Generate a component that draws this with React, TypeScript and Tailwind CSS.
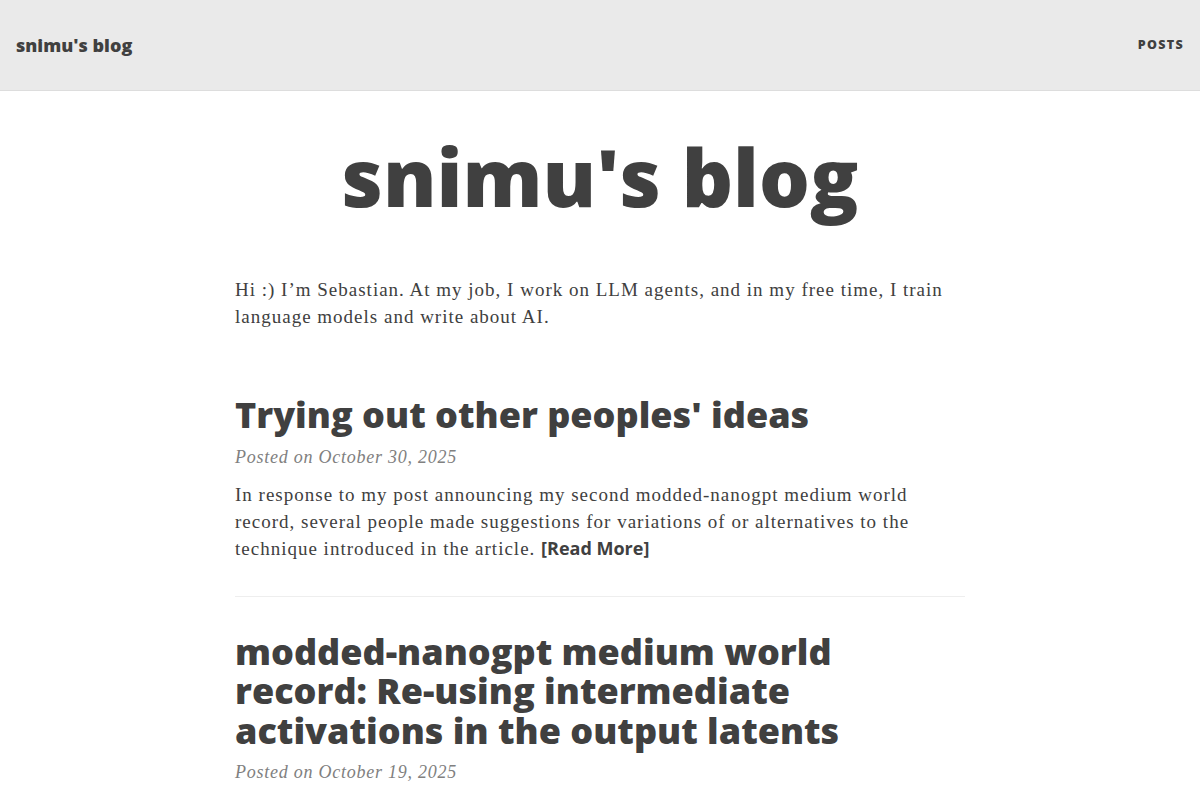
export default function App() {
  const serif = "font-['Liberation_Serif',serif]";
  return (
    <div className="min-h-screen bg-white text-[#404040]">
      <header className="h-[91px] bg-[#eaeaea] border-b border-[#dddddd] flex items-center justify-between px-4 font-['Open_Sans',sans-serif]">
        <div className="text-[18px] font-extrabold text-[#404040]">snimu's blog</div>
        <div className="text-[12.5px] font-extrabold tracking-[1.3px] uppercase text-[#404040] mt-[1px]">Posts</div>
      </header>
      <div className="text-center mt-[41px] font-['Open_Sans',sans-serif] font-extrabold text-[80px] leading-[1.1]">snimu's blog</div>
      <main className="w-[730px] mx-auto">
        <p className={`${serif} text-[19px] leading-[27px] mt-[56px] tracking-[1px]`}>
          Hi :) I’m Sebastian. At my job, I work on LLM agents, and in my free time, I train language models and write about AI.
        </p>
        <article className="mt-[65px]">
          <h2 className="font-['Open_Sans',sans-serif] font-extrabold text-[36px] leading-[1.1]">Trying out other peoples' ideas</h2>
          <p className={`${serif} italic text-[18px] leading-[27px] text-[#808080] mt-[9px] tracking-[0.75px]`}>Posted on October 30, 2025</p>
          <p className={`${serif} text-[19px] leading-[27px] mt-[10px] tracking-[1px]`}>
            In response to my post announcing my second modded-nanogpt medium world record, several people made suggestions for variations of or alternatives to the technique introduced in the article.{" "}
            <span className="font-['Open_Sans',sans-serif] font-bold text-[18px] tracking-normal">[Read More]</span>
          </p>
        </article>
        <hr className="mt-[34px] border-0 border-t border-[#eeeeee]" />
        <article className="mt-[35px]">
          <h2 className="font-['Open_Sans',sans-serif] font-extrabold text-[36px] leading-[1.1]">modded-nanogpt medium world record: Re-using intermediate activations in the output latents</h2>
          <p className={`${serif} italic text-[18px] leading-[27px] text-[#808080] mt-[9px] tracking-[0.75px]`}>Posted on October 19, 2025</p>
        </article>
      </main>
    </div>
  );
}
